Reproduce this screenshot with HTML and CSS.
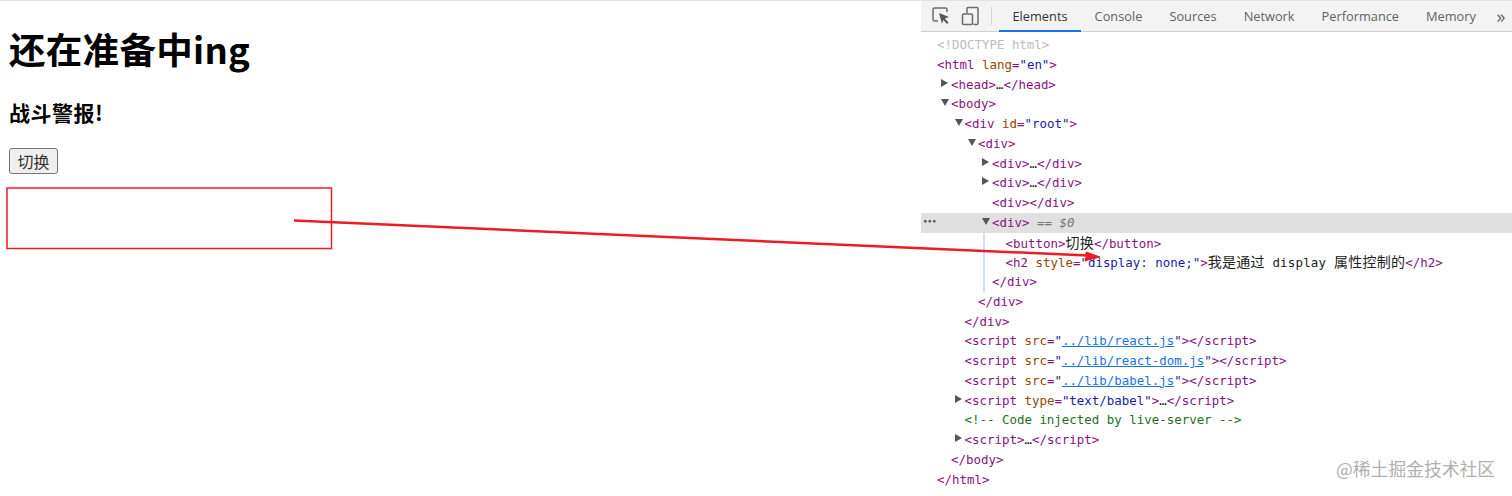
FILE: index.html
```html
<!DOCTYPE html>
<html lang="zh">
<head>
<meta charset="utf-8">
<title>display</title>
<link rel="stylesheet" href="styles.css">
</head>
<body>
<div class="screen">
  <main class="page">
    <h1 class="title">还在准备中ing</h1>
    <h3 class="subtitle">战斗警报!</h3>
    <button class="toggle">切换</button>
  </main>
  <section class="devtools">
    <header class="toolbar">
      <svg class="tool-icon" width="20" height="20" viewBox="0 0 20 20" fill="none">
        <path d="M7 15H3.500A1.500 1.500 0 0 1 2 13.500V3.500A1.500 1.500 0 0 1 3.500 2h11A1.500 1.500 0 0 1 16 3.500V6" stroke="#6a6d70" stroke-width="1.500"/>
        <path d="M8 7l10 4-4.200 1.500 3.700 4-1.500 1.500-3.700-4-1.300 3.800z" fill="#55585b"/>
      </svg>
      <svg class="tool-icon device" width="20" height="20" viewBox="0 0 20 20" fill="none">
        <path d="M7 7V2.500A1 1 0 0 1 8 1.500h9A1 1 0 0 1 18 2.500v15a1 1 0 0 1-1 1h-3.500" stroke="#6a6d70" stroke-width="1.500"/>
        <rect x="2.500" y="8" width="10" height="10.500" rx="1" stroke="#6a6d70" stroke-width="1.500"/>
      </svg>
      <span class="tool-sep"></span>
      <nav class="tabs">
        <span class="tab active">Elements</span>
        <span class="tab">Console</span>
        <span class="tab">Sources</span>
        <span class="tab">Network</span>
        <span class="tab">Performance</span>
        <span class="tab">Memory</span>
      </nav>
      <span class="more">»</span>
    </header>
    <div class="tree">
      <div class="row l0"><span class="doctype">&lt;!DOCTYPE html&gt;</span></div>
      <div class="row l0"><span class="tag">&lt;html</span> <span class="attr">lang</span><span class="tag">=</span><span class="val">"en"</span><span class="tag">&gt;</span></div>
      <div class="row l1"><i class="arrow closed"></i><span class="tag">&lt;head&gt;</span>…<span class="tag">&lt;/head&gt;</span></div>
      <div class="row l1"><i class="arrow open"></i><span class="tag">&lt;body&gt;</span></div>
      <div class="row l2"><i class="arrow open"></i><span class="tag">&lt;div</span> <span class="attr">id</span><span class="tag">=</span><span class="val">"root"</span><span class="tag">&gt;</span></div>
      <div class="row l3"><i class="arrow open"></i><span class="tag">&lt;div&gt;</span></div>
      <div class="row l4"><i class="arrow closed"></i><span class="tag">&lt;div&gt;</span>…<span class="tag">&lt;/div&gt;</span></div>
      <div class="row l4"><i class="arrow closed"></i><span class="tag">&lt;div&gt;</span>…<span class="tag">&lt;/div&gt;</span></div>
      <div class="row l4"><span class="tag">&lt;div&gt;&lt;/div&gt;</span></div>
      <div class="row l4 selected"><span class="dots">•••</span><i class="arrow open"></i><span class="tag">&lt;div&gt;</span> <span class="marker">== <em>$0</em></span></div>
      <div class="guided">
        <div class="row l5"><span class="tag">&lt;button&gt;</span><span class="cjk">切换</span><span class="tag">&lt;/button&gt;</span></div>
        <div class="row l5"><span class="tag">&lt;h2</span> <span class="attr">style</span><span class="tag">=</span><span class="val">"display: none;"</span><span class="tag">&gt;</span><span class="cjk">我是通过</span><span class="txt"> display </span><span class="cjk">属性控制的</span><span class="tag">&lt;/h2&gt;</span></div>
        <div class="row l4"><span class="tag">&lt;/div&gt;</span></div>
      </div>
      <div class="row l3"><span class="tag">&lt;/div&gt;</span></div>
      <div class="row l2"><span class="tag">&lt;/div&gt;</span></div>
      <div class="row l2"><span class="tag">&lt;script</span> <span class="attr">src</span><span class="tag">=</span><span class="val">"<a class="link">../lib/react.js</a>"</span><span class="tag">&gt;&lt;/script&gt;</span></div>
      <div class="row l2"><span class="tag">&lt;script</span> <span class="attr">src</span><span class="tag">=</span><span class="val">"<a class="link">../lib/react-dom.js</a>"</span><span class="tag">&gt;&lt;/script&gt;</span></div>
      <div class="row l2"><span class="tag">&lt;script</span> <span class="attr">src</span><span class="tag">=</span><span class="val">"<a class="link">../lib/babel.js</a>"</span><span class="tag">&gt;&lt;/script&gt;</span></div>
      <div class="row l2"><i class="arrow closed"></i><span class="tag">&lt;script</span> <span class="attr">type</span><span class="tag">=</span><span class="val">"text/babel"</span><span class="tag">&gt;</span>…<span class="tag">&lt;/script&gt;</span></div>
      <div class="row l2"><span class="comment">&lt;!-- Code injected by live-server --&gt;</span></div>
      <div class="row l2"><i class="arrow closed"></i><span class="tag">&lt;script&gt;</span>…<span class="tag">&lt;/script&gt;</span></div>
      <div class="row l1"><span class="tag">&lt;/body&gt;</span></div>
      <div class="row l0"><span class="tag">&lt;/html&gt;</span></div>
    </div>
  </section>
  <svg class="annotation" width="1512" height="496" viewBox="0 0 1512 496" fill="none">
    <rect x="7" y="188" width="324.500" height="60.500" stroke="#ee1c25" stroke-width="1.500"/>
    <path d="M294 220.500L1088 255.500" stroke="#ed1c24" stroke-width="2.500"/>
    <path d="M1100 257L1086 252L1086 260.500Z" fill="#ed1c24" stroke="#ed1c24"/>
  </svg>
  <span class="watermark">@稀土掘金技术社区</span>
</div>
</body>
</html>
```
FILE: styles.css
```css
* { box-sizing: border-box; }
html, body { margin: 0; padding: 0; background: #fff; }
.screen {
  position: relative;
  display: flex;
  width: 1512px;
  height: 496px;
  overflow: hidden;
  border-top: 1px solid #e2e2e2;
}
.page {
  width: 921px;
  flex: none;
  padding: 24px 9px 0;
  font-family: "Noto Sans CJK SC", "Noto Sans", sans-serif;
  color: #000;
}
.title {
  margin: 0;
  font-size: 36.500px;
  line-height: 48px;
  font-weight: 700;
  letter-spacing: 0.300px;
}
.subtitle {
  margin: 26px 0 0;
  font-size: 21px;
  line-height: 27px;
  font-weight: 700;
  letter-spacing: 0.500px;
}
.toggle {
  display: block;
  margin-top: 22px;
  width: 49px;
  height: 26px;
  padding: 0;
  font-family: "Noto Sans CJK SC", sans-serif;
  font-size: 16px;
  line-height: 24px;
  color: #333;
  background: #efefef;
  border: 1px solid #767676;
  border-radius: 3px;
}
.devtools { flex: 1; min-width: 0; }
.toolbar {
  display: flex;
  align-items: center;
  height: 31px;
  background: #f3f3f3;
  border-bottom: 1px solid #d0d0d0;
  padding-left: 10px;
}
.tool-icon { flex: none; }
.device { margin-left: 9px; }
.tool-sep {
  width: 1px;
  height: 18px;
  margin: 0 7px 0 11px;
  background: #d4d4d4;
}
.tabs { display: flex; height: 100%; }
.tab {
  display: flex;
  align-items: center;
  padding: 0 13.500px;
  font-family: "Open Sans", "Noto Sans", sans-serif;
  font-size: 12.800px;
  color: #5f6368;
  white-space: nowrap;
}
.tab.active {
  color: #333;
  border-bottom: 2px solid #1a73e8;
  margin-bottom: -1px;
}
.more {
  margin-left: 7px;
  font-family: "Open Sans", sans-serif;
  font-size: 18px;
  line-height: 24px;
  color: #5f6368;
}
.tree {
  display: flow-root;
  padding-top: 3.100px;
  font-family: "DejaVu Sans Mono", "Noto Sans CJK SC", monospace;
  font-size: 12.450px;
  color: #222;
}
.row {
  position: relative;
  height: 19.760px;
  line-height: 19.760px;
  white-space: pre;
}
.l0 { padding-left: 16px; }
.l1 { padding-left: 30px; }
.l2 { padding-left: 43.500px; }
.l3 { padding-left: 57px; }
.l4 { padding-left: 71px; }
.l5 { padding-left: 84.500px; }
.selected { background: #e0e0e0; }
.guided { position: relative; }
.guided::before {
  content: "";
  position: absolute;
  left: 62px;
  top: 0;
  bottom: 0;
  width: 1.500px;
  background: #cfe2f7;
}
.arrow {
  position: absolute;
  margin-left: -10px;
  width: 0;
  height: 0;
}
.arrow.closed {
  margin-top: 4px;
  border-left: 7px solid #555;
  border-top: 4.500px solid transparent;
  border-bottom: 4.500px solid transparent;
}
.arrow.open {
  margin-top: 5px;
  border-top: 7px solid #555;
  border-left: 4.500px solid transparent;
  border-right: 4.500px solid transparent;
}
.dots {
  position: absolute;
  left: 2px;
  top: -1px;
  font-size: 7.500px;
  font-weight: 700;
  color: #555;
}
.doctype { color: #bdbdbd; }
.tag { color: #881280; }
.attr { color: #994500; }
.val { color: #1a1aa6; }
.link { color: #1a73e8; text-decoration: underline; }
.comment { color: #236e25; }
.txt { color: #222; letter-spacing: 0.200px; }
.cjk {
  font-family: "Noto Sans CJK SC", sans-serif;
  font-size: 14px;
  letter-spacing: 0.250px;
  color: #222;
}
.marker { color: #777; }
.marker em { font-style: italic; }
.annotation {
  position: absolute;
  left: 0;
  top: -1px;
  pointer-events: none;
}
.watermark {
  position: absolute;
  left: 1336px;
  top: 455px;
  font-family: "Noto Sans CJK SC", sans-serif;
  font-size: 17.800px;
  line-height: 24px;
  color: #b0b0b0;
}
```
